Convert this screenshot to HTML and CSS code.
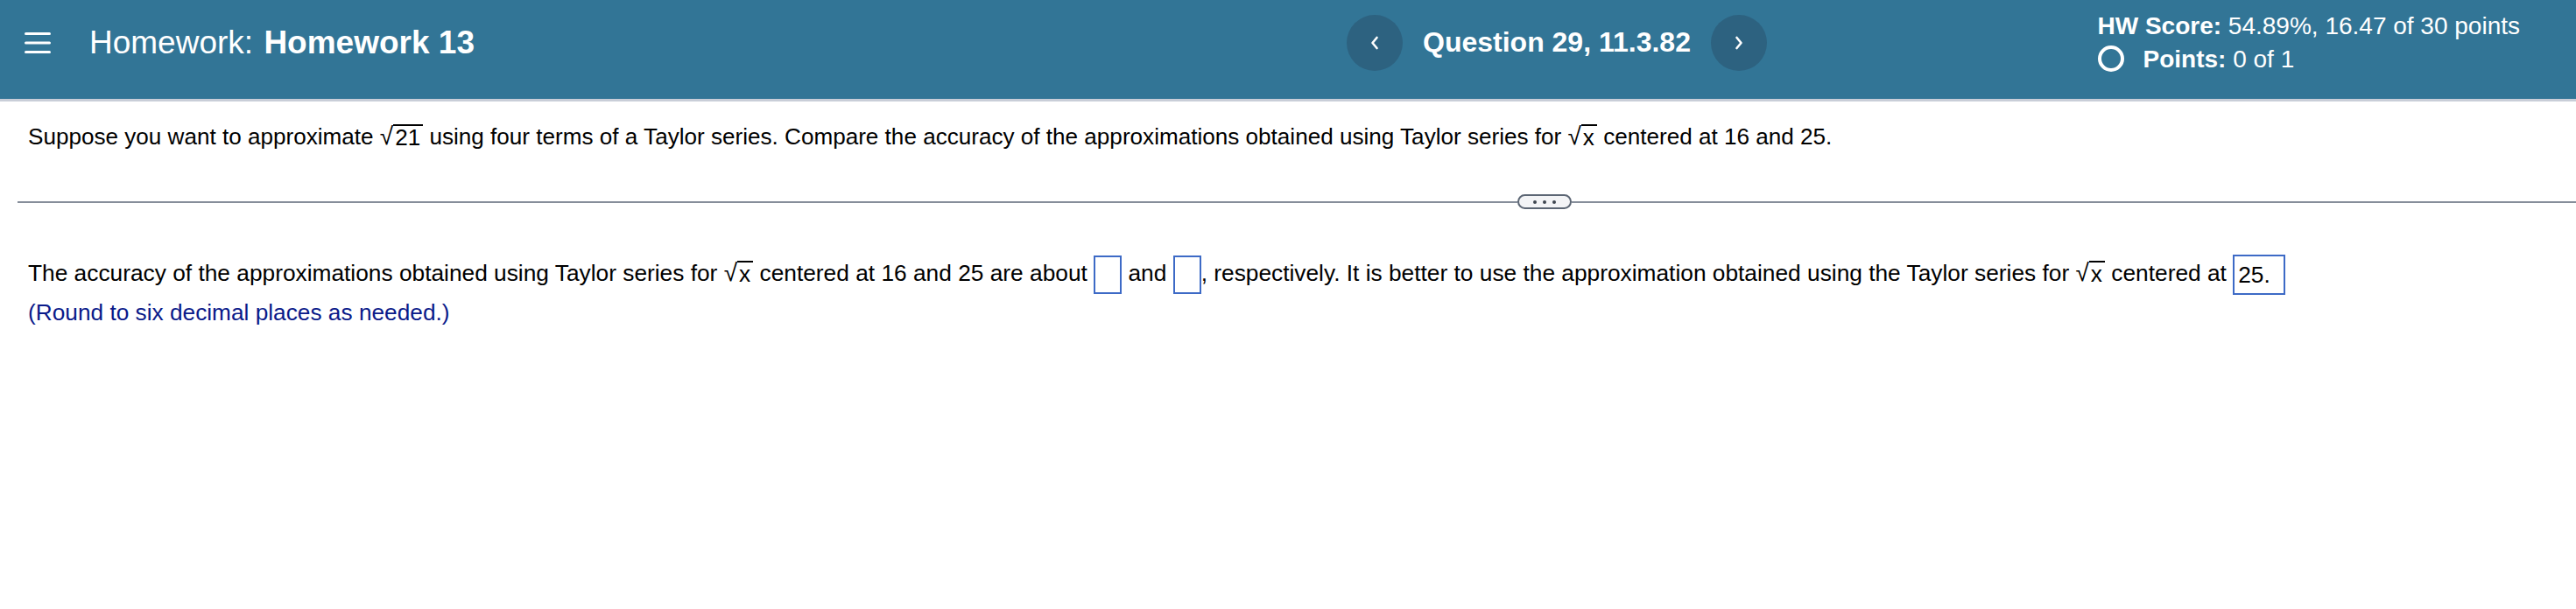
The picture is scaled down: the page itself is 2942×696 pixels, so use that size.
FILE: index.html
```html
<!DOCTYPE html>
<html>
<head>
<meta charset="utf-8">
<link rel="stylesheet" href="styles.css">
</head>
<body>
<header class="topbar">
  <div class="left">
    <svg class="burger" width="30" height="24" viewBox="0 0 30 24"><rect x="0" y="0" width="30" height="3" rx="1.5" fill="#fff"/><rect x="0" y="10.5" width="30" height="3" rx="1.5" fill="#fff"/><rect x="0" y="21" width="30" height="3" rx="1.5" fill="#fff"/></svg>
    <div class="title"><span class="lbl">Homework:</span> <b>Homework 13</b></div>
  </div>
  <div class="nav">
    <span class="circ"><svg width="14" height="20" viewBox="0 0 14 20"><path d="M9.5 4 L4.5 10 L9.5 16" stroke="#fff" stroke-width="2.6" fill="none" stroke-linecap="round" stroke-linejoin="round"/></svg></span>
    <span class="qtitle">Question 29, 11.3.82</span>
    <span class="circ"><svg width="14" height="20" viewBox="0 0 14 20"><path d="M4.5 4 L9.5 10 L4.5 16" stroke="#fff" stroke-width="2.6" fill="none" stroke-linecap="round" stroke-linejoin="round"/></svg></span>
  </div>
  <div class="score">
    <div><b>HW Score:</b> 54.89%, 16.47 of 30 points</div>
    <div class="pts"><span class="ring"></span><span><b>Points:</b> 0 of 1</span></div>
  </div>
</header>
<div class="rule"></div>
<main>
  <p class="q">Suppose you want to approximate <span class="rad"><span class="sym">√</span><span class="ov">21</span></span> using four terms of a Taylor series. Compare the accuracy of the approximations obtained using Taylor series for <span class="rad"><span class="sym">√</span><span class="ov">x</span></span> centered at 16 and 25.</p>
  <div class="divider"><span class="line first"></span><span class="more"><i></i><i></i><i></i></span><span class="line"></span></div>
  <p class="ans">The accuracy of the approximations obtained using Taylor series for <span class="rad"><span class="sym">√</span><span class="ov">x</span></span> centered at 16 and 25 are about <span class="box"></span> and <span class="box"></span>, respectively. It is better to use the approximation obtained using the Taylor series for <span class="rad"><span class="sym">√</span><span class="ov">x</span></span> centered at <span class="box filled">25.</span></p>
  <p class="hint">(Round to six decimal places as needed.)</p>
</main>
</body>
</html>
```
FILE: styles.css
```css
* { box-sizing: border-box; }
body { margin: 0; font-family: "Liberation Sans", Arial, sans-serif; background: #fff; color: #000; }
.topbar { height: 113px; background: #327596; color: #fff; display: flex; align-items: center; padding: 0 64px 16px 28px; }
.left { width: 1510px; flex: none; display: flex; align-items: center; gap: 44px; }
.burger { display: block; }
.title { font-size: 37px; }
.title .lbl { margin-right: 2px; }
.nav { display: flex; align-items: center; gap: 23px; }
.circ { width: 64px; height: 64px; border-radius: 50%; background: #2d6280; display: flex; align-items: center; justify-content: center; }
.qtitle { font-size: 32px; font-weight: bold; }
.score { margin-left: auto; display: flex; flex-direction: column; font-size: 28px; line-height: 37.5px; }
.pts { display: flex; align-items: center; gap: 22px; }
.ring { width: 30px; height: 30px; border: 4px solid #fff; border-radius: 50%; }
.rule { height: 3px; background: #c9ced8; }
main { padding: 0 0 0 32px; }
.q { font-size: 26.1px; line-height: 30px; margin: 25px 0 0; }
.rad { display: inline-flex; align-items: flex-end; }
.rad .sym { font-size: 28px; line-height: 30px; }
.rad .ov { border-top: 2px solid #000; padding: 0 3px 0 2px; line-height: 27px; }
.divider { display: flex; align-items: center; margin: 51px 0 0 -12px; }
.line { flex: 1; height: 2px; background: #868e9a; }
.line.first { flex: none; width: 1713px; }
.more { width: 62px; height: 17px; border: 2.5px solid #5c6674; border-radius: 9px; background: #f3f4f6; display: flex; align-items: center; justify-content: center; gap: 7px; }
.more i { width: 4px; height: 4px; border-radius: 50%; background: #3f4650; }
.ans { font-size: 26.3px; line-height: 46px; margin: 50px 0 0; }
.box { display: inline-block; width: 32px; height: 44px; border: 2px solid #3d6ac6; vertical-align: middle; }
.box.filled { width: auto; padding: 0 15px 0 4px; height: 46px; line-height: 42px; }
.hint { font-size: 26.25px; line-height: 30px; color: #0a1a8a; margin: 5px 0 0; }
```
